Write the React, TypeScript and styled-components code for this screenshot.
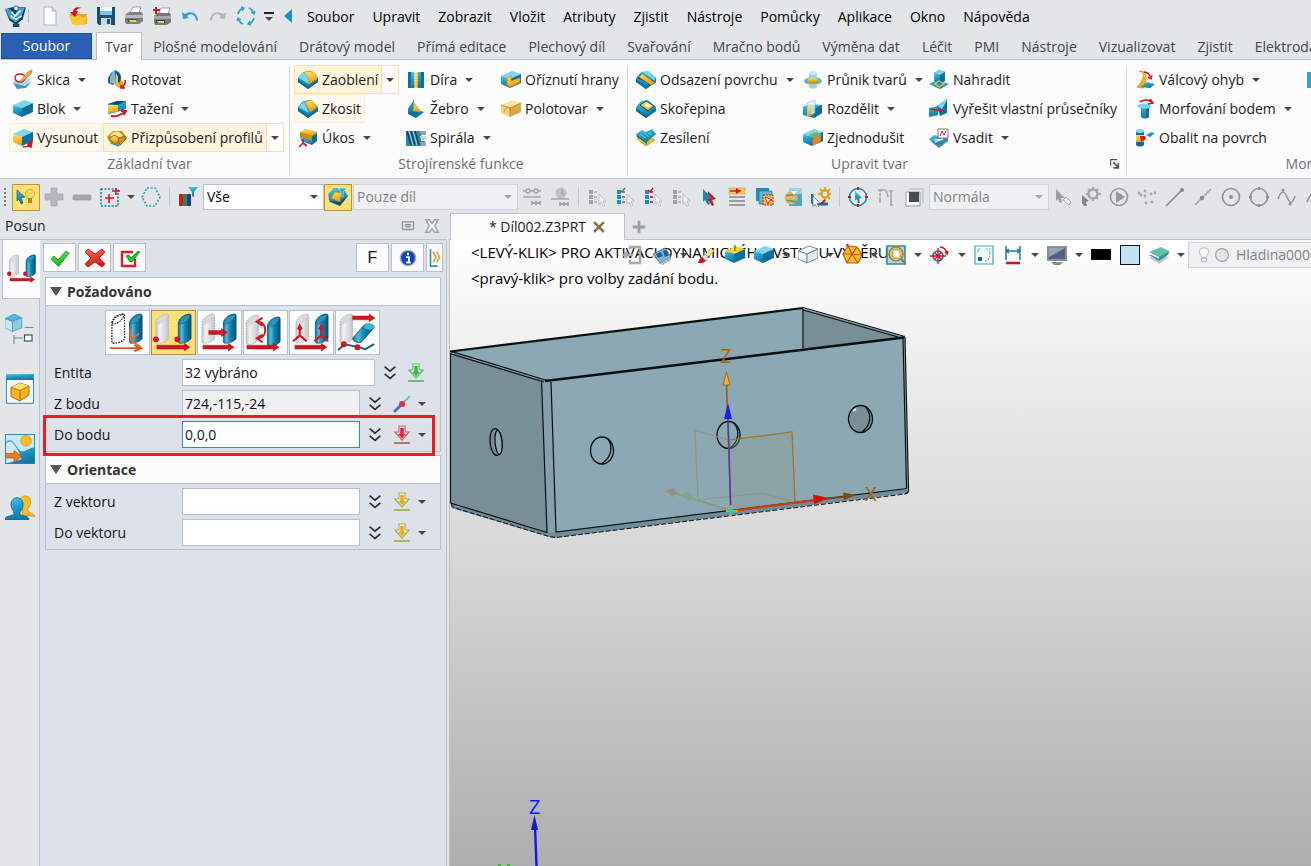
import React, { ReactNode } from "react";
import styled, { createGlobalStyle, css } from "styled-components";

const GlobalStyle = createGlobalStyle`
  * { box-sizing: border-box; }
  html, body { margin: 0; padding: 0; }
  body {
    font-family: "Open Sans", "Noto Sans", sans-serif;
    font-size: 14px;
    line-height: 20px;
    color: #1a1a1a;
    background: #e2e6e9;
    overflow: hidden;
  }
  button, input, select { font: inherit; color: inherit; margin: 0; }
  button { padding: 0; border: 0; background: none; white-space: nowrap; }
  svg { display: block; flex: none; }
`;

/* ---------- drawings ---------- */

const C = {
  top: "#7ad7ef",
  mid: "url(#mid)",
  dark: "#0f6f98",
  deep: "#0a4f70",
  yel: "url(#yel)",
  yelD: "#d08c12",
  yelL: "#ffe58a",
  red: "#d2161e",
  gray: "#a3a5a8",
  grayD: "#85878a",
};

type BlockProps = { a?: string; b?: string; c?: string };
const Block = ({ a = C.top, b = C.mid, c = C.dark }: BlockProps) => (
  <g>
    <polygon points="0,6 11,1 20,4 9,9" fill={a} />
    <polygon points="0,6 9,9 9,18 0,14" fill={b} />
    <polygon points="9,9 20,4 20,13 9,18" fill={c} />
  </g>
);

const Wedge = ({ children }: { children?: ReactNode }) => (
  <g>
    <polygon points="0,8 5,2 12,1 20,8 20,12 10,19 0,12" fill={C.mid} />
    <polygon points="0,9 10,16 20,9 20,12 10,19 0,12" fill={C.dark} />
    {children}
  </g>
);

const Pointer = ({ x = 0, y = 0, f = "#fff", s = "#8c8f93" }) => (
  <path d={`M${x} ${y}l7 7-3 .4 2 4-2 1-2-4-2 2z`} fill={f} stroke={s} strokeWidth="0.8" />
);

const Arrow = ({ x1, x2, y, c = C.red }: { x1: number; x2: number; y: number; c?: string }) => (
  <path d={`M${x1} ${y - 2}H${x2 - 6}V${y - 4}L${x2} ${y}L${x2 - 6} ${y + 4}V${y + 2}H${x1}Z`} fill={c} stroke="#8d0d12" strokeWidth="0.4" />
);

const Pipe = ({ x, y, look = "pipe" }: { x: number; y: number; look?: "pipe" | "ghost" | "outline" }) => {
  const solid = look === "pipe";
  return (
    <g transform={`translate(${x} ${y})`}>
      <path
        d="M0 9C1 4 5 1 11 0C12.500 0 13 1 13 2V25C12 28 6 30 2 30C0 30 0 29 0 28Z"
        fill={solid ? "url(#pipe)" : look === "ghost" ? "url(#ghost)" : "#fbfbfb"}
        stroke={solid ? "#0a5878" : look === "ghost" ? "#a5a8ab" : "#222"}
        strokeWidth={look === "outline" ? 1.3 : 0.8}
        strokeDasharray={solid ? undefined : "1.6 1.2"}
      />
      <path
        d="M0.500 9C2 4 7 1 12 0.500C13 3 8 10 1 10.500Z"
        fill={solid ? "#2596bd" : look === "ghost" ? "#d9dadc" : "#fbfbfb"}
        stroke={solid ? "#0a5878" : look === "ghost" ? "#b9bbbe" : "#222"}
        strokeWidth={look === "outline" ? 1.2 : 0.5}
        strokeDasharray={solid ? undefined : "1.6 1.2"}
      />
    </g>
  );
};

const Checklist = ({ a, b, mark }: { a: string; b: string; mark?: string }) => (
  <g>
    {[3, 8, 13].map((y) => (
      <g key={y}>
        <rect x="2" y={y} width="4" height="4" fill={a} />
        <rect x="7" y={y + 1} width="3" height="2" fill={b} />
      </g>
    ))}
    {mark && <path d="M5 3l2 2 3-4" stroke={mark} strokeWidth="1.3" fill="none" />}
    <Pointer x={12} y={7} f="#eceef0" s="#b3b5b8" />
  </g>
);

const art: Record<string, ReactNode> = {
  app: (
    <g>
      <path d="M1 4l6-2 13 0-3 11-6 5-6-4z" fill="#123b57" />
      <path d="M1 3l5 1 4 5 3-6 6-1-3 8-5 6-6-4z" fill="#3aa6d8" />
      <path d="M7 6l3 4 5-5M6 10l5 3 5-3" stroke="#eef8ff" strokeWidth="1.4" fill="none" />
      <circle cx="11" cy="3" r="2.2" fill="#dfe7ec" stroke="#345" strokeWidth=".8" />
      <path d="M8 17h6v3H8z" fill="#14466a" />
    </g>
  ),
  page: <path d="M4 1h8l4 4v14H4zM12 1v4h4" fill="#fff" stroke="#a9b3be" />,
  open: (
    <g>
      <path d="M2 8l2-2h5l2 2h8v10H4z" fill="#e9a21c" />
      <path d="M1 10h12l1 2 5-3-2 10H5z" fill="#fcc53c" />
      <path d="M14 2C9 0 5 2 5 6H2l5 5 3-6H8c1-2 3-3 6-3z" fill={C.red} />
    </g>
  ),
  save: (
    <g>
      <path d="M1 1h18v18H3l-2-2z" fill="#17506e" />
      <rect x="4" y="1" width="12" height="8" fill="#eaf6fb" />
      <path d="M4 5h12v4H4z" fill="#7cc6e4" />
      <rect x="5" y="12" width="10" height="7" fill="#cfd6db" />
      <rect x="11" y="13" width="3" height="5" fill="#17506e" />
    </g>
  ),
  print: (
    <g>
      <path d="M6 7l3-6h8l-2 6z" fill="#fff" stroke="#888" strokeWidth=".8" />
      <path d="M1 9l4-3h13l1 3v6l-4 3H2l-1-2z" fill="#7d8084" />
      <path d="M1 9h18v3H1z" fill="#b9bcbf" />
      <path d="M3 13h10v3H4z" fill="#4a4d51" />
      <path d="M5 14h7l1 2H6z" fill="#e9d44c" />
    </g>
  ),
  printAdd: (
    <g>
      <path d="M7 7l2-5h9l-2 6z" fill="#fff" stroke="#888" strokeWidth=".8" />
      <path d="M2 10l4-3h12l1 3v6l-4 3H3l-1-2z" fill="#74777b" />
      <path d="M2 10h17v3H2z" fill="#a9acaf" />
      <path d="M4 14h9v3H4z" fill="#3f4246" />
      <path d="M5 15h7v2H6z" fill="#e9d44c" />
      <path d="M4 1v7M1 4h7" stroke={C.red} strokeWidth="2" />
    </g>
  ),
  undo: <path d="M2 6l1 7 6-1-2-2c4-3 8-2 9 4l2 1c0-8-7-11-13-7z" fill="#2e9fc9" />,
  redo: <path d="M18 6l-1 7-6-1 2-2c-4-3-8-2-9 4l-2 1c0-8 7-11 13-7z" fill="#b3b7bb" />,
  cycle: (
    <g fill="none" stroke="#2ba0c8" strokeWidth="1.8">
      <path d="M2 8c1-3 2-5 5-6M13 2c3 1 4 3 5 6M18 12c-1 3-2 5-5 6M7 18c-3-1-4-3-5-6" />
      <path d="M5 1l3 1-2 3M19 5l-1 3-3-2M15 19l-3-1 2-3M1 15l1-3 3 2" strokeWidth="1.4" />
    </g>
  ),
  sketch: (
    <g>
      <path d="M0 12l7-6 11 3-5 9-10-1z" fill="#a9d8ea" />
      <path d="M0 13l12 3 7-5-6 7-9 1z" fill="#3e9cc2" />
      <ellipse cx="7" cy="8" rx="5" ry="4" fill="#fff" stroke={C.red} strokeWidth="1.4" />
      <path d="M8 10l7-8 4-2-1 4-8 7-3 1z" fill="#f4a73b" stroke="#a8671a" strokeWidth=".6" />
    </g>
  ),
  block: <Block />,
  extrude: (
    <g>
      <Block b={C.yel} />
      <path d="M10 19l6-1M15 16l4-3-1 6-3-1z" stroke={C.red} fill={C.red} strokeWidth="1.6" />
    </g>
  ),
  revolve: (
    <g>
      <path d="M1 8l3-5 4-3 4 2 2 4v8l-4-2-4 3-5-2z" fill={C.dark} />
      <path d="M3 7l3-6 2 0v13l-5-1z" fill="#7cb7d6" />
      <path d="M9 3l4 8 3 0v5l-4 2-4-3z" fill={C.yel} />
      <path d="M9 2l4 3v8l-2-1V6z" fill={C.deep} />
      <path d="M18 10c1 4-1 6-4 8M14 15v3h4" stroke={C.red} strokeWidth="1.6" fill="none" />
    </g>
  ),
  sweep: (
    <g>
      <path d="M1 5l9-3 9 0v8l-9 3-9 2z" fill={C.mid} />
      <path d="M1 5l9-3 9 0-8 4z" fill={C.deep} />
      <path d="M1 6l10 0v7l-10 1z" fill={C.yel} />
      <path d="M4 17c6 1 9-1 14-4M14 12l5 0-2 4" stroke={C.red} strokeWidth="1.8" fill="none" />
    </g>
  ),
  loft: (
    <g>
      <path d="M0 9l6-6 9 0 5 7-7 8-9-2z" fill={C.yelD} />
      <path d="M3 8c3-6 10-6 13 0l-5 3z" fill={C.yelL} />
      <path d="M2 11l5-4 6 3-4 6z" fill={C.yel} stroke="#7d5c12" strokeWidth=".8" />
      <path d="M11 11l6-3 2 3-6 6z" fill="#cf8f28" stroke="#7d5c12" strokeWidth=".7" />
      <path d="M4 15l8 3" stroke="#1d9fca" strokeWidth="1.6" />
    </g>
  ),
  fillet: (
    <Wedge>
      <path d="M1 8C2 4 4 2 7 3c3 2 4 7 4 11z" fill={C.top} />
      <path d="M6 3c3-3 9-2 11 1l2 5-8 5C11 9 9 5 6 3z" fill={C.yel} stroke={C.yelD} strokeWidth=".7" />
    </Wedge>
  ),
  chamfer: (
    <Wedge>
      <path d="M7 3l6-2 6 7-7 5z" fill={C.yel} stroke={C.yelD} strokeWidth=".7" />
      <path d="M1 8l5-5 5 11z" fill={C.top} />
    </Wedge>
  ),
  draft: (
    <g>
      <path d="M2 5l5-4 12 3-3 4v6l-6-2-8-2z" fill={C.mid} />
      <path d="M2 4l6-3 11 3-5 4z" fill={C.yel} />
      <path d="M2 4l12 4v5L2 9z" fill={C.yelD} />
      <path d="M14 9l5-4v8l-5 4z" fill={C.dark} />
      <path d="M3 9l11 4v4L3 13z" fill={C.mid} />
      <path d="M5 11v4M5 15l-4 4M5 15l4 3" stroke={C.red} strokeWidth="1.6" />
    </g>
  ),
  hole: (
    <g>
      <path d="M2 2h16v16H2z" fill={C.mid} />
      <path d="M2 2h3v16H2zM15 2h3v16h-3z" fill={C.dark} />
      <path d="M8 2h4v16H8z" fill={C.yel} />
      <path d="M10 1v18" stroke="#fff" strokeDasharray="2 1" />
    </g>
  ),
  rib: (
    <g>
      <path d="M2 10l6-9v9l10 3-8 6-8-4z" fill={C.dark} />
      <path d="M2 10l6-9v10l-6 3z" fill={C.mid} />
      <path d="M8 4l7 9-8-1z" fill={C.yel} stroke={C.yelD} strokeWidth=".7" />
    </g>
  ),
  spiral: (
    <g>
      <path d="M0 3h13l6 0v4h-4l2 3-2 3h4v5H0z" fill="#2b87ad" />
      <path d="M1 3l4 14M5 3l4 14M9 3l4 14" stroke="#0b4460" strokeWidth="1.6" />
      <path d="M3 3l4 14M7 3l4 14" stroke="#a5dced" strokeWidth="1" />
      <path d="M14 3h6v4h-5zM14 14h6v4h-5z" fill="#9b9ea2" />
      <path d="M14 8h6v4h-5z" fill="#cfd1d4" />
    </g>
  ),
  trimEdge: (
    <g>
      <Block />
      <path d="M6 8l4-2v5l9-3v4l-10 5-3-2z" fill={C.yel} stroke={C.yelD} strokeWidth=".7" />
    </g>
  ),
  stock: (
    <g>
      <Block a="#fae5a2" b="#f3d27a" c="#d9a642" />
      <path d="M3 13c1-4 3-5 6-4M9 9l11-5M0 6l9 3v9" stroke="#b98a26" strokeWidth=".9" fill="none" />
    </g>
  ),
  offset: (
    <Wedge>
      <path d="M1 8l4-4 14 8-3 3z" fill={C.deep} />
      <path d="M3 7l3-3 13 9-4 2z" fill={C.yel} stroke={C.yelD} strokeWidth=".5" />
      <path d="M7 2l5-1 7 7v3z" fill={C.top} />
    </Wedge>
  ),
  shell: (
    <Wedge>
      <path d="M4 6l6-4 8 5-6 5z" fill={C.yel} stroke={C.deep} />
      <path d="M8 6l4-2 4 3-4 2z" fill="#fff4c2" />
    </Wedge>
  ),
  thicken: (
    <g>
      <path d="M1 11l9 7 9-6-8-4z" fill={C.yel} stroke={C.yelD} strokeWidth=".7" />
      <path d="M0 6l6-4 4 2 6-3 4 5-9 8z" fill={C.mid} />
      <path d="M4 6l6 4M7 4l6 5M12 5l4 2" stroke="#8fdcf0" strokeWidth=".8" />
      <path d="M0 6l11 8v2L1 9z" fill={C.dark} />
    </g>
  ),
  intersect: (
    <g>
      <ellipse cx="10" cy="11" rx="9" ry="4" fill="#5cb6d6" />
      <path d="M6 3h8v14c-2 2-6 2-8 0z" fill="#9ad3e8" />
      <ellipse cx="10" cy="3" rx="4" ry="2" fill="#c5e8f3" />
      <path d="M5 10h10v2c-2 3-8 3-10 0z" fill={C.yelD} />
      <ellipse cx="10" cy="10" rx="5" ry="2" fill={C.yel} />
    </g>
  ),
  divide: (
    <g>
      <path d="M0 8l6-3 13 1v8l-8 5-11-3z" fill={C.mid} />
      <path d="M11 10l8-4v8l-8 5z" fill={C.dark} />
      <path d="M4 4l8-3v13l-8 4z" fill="#e9f5fa" opacity=".75" stroke="#8ab" strokeWidth=".7" />
      <path d="M5 8h3v9H5z" fill={C.yel} />
    </g>
  ),
  simplify: (
    <g>
      <Block />
      <path d="M5 7l8-3 6 3-8 4z" fill="#7fae5c" />
      <path d="M9 12l9-5v6l-8 5z" fill="#e0842e" />
    </g>
  ),
  replace: (
    <g>
      <path d="M0 14l8-4 12 4-9 5z" fill={C.mid} />
      <path d="M5 3l5-3 6 2v9l-5 3-6-3z" fill={C.dark} />
      <path d="M5 3l6 2v9l-6-3z" fill={C.mid} />
      <path d="M5 3l5-3 6 2-5 3z" fill={C.top} />
      <path d="M6 14l4-3 5 3-5 3z" fill="none" stroke="#fdc634" strokeWidth="1.2" />
    </g>
  ),
  selfInt: (
    <g>
      <path d="M0 9l9-2 0 9-9 2z" fill={C.mid} />
      <path d="M8 7l10-7v14l-7 3z" fill={C.dark} />
      <path d="M8 7l8-6 2 0-5 9z" fill={C.top} />
      <path d="M1 10l12 2" stroke={C.red} strokeWidth="1.5" fill="none" />
    </g>
  ),
  inlay: (
    <g>
      <path d="M0 11l5-4 14 3-9 9z" fill={C.mid} />
      <path d="M0 12l10 5 9-7v3l-9 7z" fill="#5d7f91" />
      <path d="M5 12l9-1M6 14l8-3" stroke="#fff" strokeWidth="1.2" />
      <path d="M9 1h10v9H9z" fill="#fff" stroke="#777" />
      <path d="M11 8l2-5 2 4 2-4" stroke={C.red} fill="none" />
    </g>
  ),
  bend: (
    <g>
      <path d="M4 1c6 1 5 7 1 13l-3 3 6 1c3-5 5-12 1-16z" fill={C.yel} stroke={C.yelD} strokeWidth=".8" />
      <path d="M6 17l6-5 8 2-5 4z" fill={C.mid} />
      <path d="M9 2c4 0 6 3 7 7M13 7l3 2 1-4" stroke={C.red} strokeWidth="1.3" fill="none" />
    </g>
  ),
  morph: (
    <g>
      <path d="M3 6h13l-2 4v8c-2 2-6 2-8 0V10z" fill={C.mid} />
      <ellipse cx="9.500" cy="7" rx="7" ry="2.400" fill={C.top} />
      <path d="M11 10v9c1 0 2 0 3-1v-8z" fill={C.dark} />
      <path d="M5 3c4-3 9-2 12 0M15 0l3 4-5 1" stroke={C.red} strokeWidth="1.6" fill="none" />
    </g>
  ),
  wrap: (
    <g>
      <path d="M1 3h8v14c-2 2-6 2-8 0z" fill={C.dark} />
      <ellipse cx="5" cy="3" rx="4" ry="2" fill={C.top} />
      <path d="M1 7h8v7H1z" fill={C.yel} />
      <path d="M5 8h5l1 3-5 3z" fill={C.red} />
      <path d="M11 7l5-3 4 1-5 4z" fill={C.mid} />
    </g>
  ),
  pick: (
    <g>
      <circle cx="14" cy="7" r="4.600" fill="#fbd75a" stroke="#d59a1a" strokeWidth=".8" />
      <path d="M12 11h4v5h-4z" fill="#b08b2e" />
      <path d="M1 3l8 7-4 1 2 5-2 1-2-5-2 2z" fill={C.mid} stroke={C.deep} strokeWidth=".6" />
    </g>
  ),
  plus: <path d="M7 1h6v6h6v6h-6v6H7v-6H1V7h6z" fill="#b5b8bb" stroke="#9b9ea1" strokeWidth=".6" />,
  minus: <rect x="1" y="8" width="18" height="5" rx="1" fill="#a5a8ab" stroke="#8d9093" strokeWidth=".6" />,
  marquee: (
    <g fill="none">
      <rect x="1" y="2" width="17" height="17" stroke="#1c7ea2" strokeWidth="1.6" strokeDasharray="2 1.5" />
      <path d="M9 7v9M5 11h9M16 1v7M12 4h8" stroke={C.red} strokeWidth="1.6" />
    </g>
  ),
  hexagon: <path d="M6 1h8l5 9-5 9H6L1 10z" fill="none" stroke="#2b9cc3" strokeWidth="1.6" strokeDasharray="2 1.6" />,
  colorFilter: (
    <g>
      <rect x="1" y="7" width="4" height="12" fill={C.red} />
      <rect x="5" y="7" width="4" height="12" fill="#2d8a34" />
      <rect x="9" y="7" width="4" height="12" fill="#2336a6" />
      <path d="M10 0h10l-4 5v5l-2-1V5z" fill={C.mid} />
    </g>
  ),
  partFilter: (
    <g>
      <path d="M0 7l6-6h9l5 8-8 8-9-3z" fill={C.mid} />
      <path d="M0 8l3 6 9 1 8-6-8 10-10-4z" fill={C.deep} />
      <path d="M3 11l4-6 6 1-1 9z" fill={C.yel} stroke={C.yelD} strokeWidth=".6" />
      <path d="M10 1h9l-4 4v5l-2-1V5z" fill={C.mid} stroke="#e8f6fb" strokeWidth=".6" />
    </g>
  ),
  chainRef: (
    <g stroke={C.gray} fill="none" strokeWidth="1.4">
      <path d="M1 4h3M8 4h4M16 4h3M1 10h18" />
      <circle cx="6" cy="4" r="2" />
      <circle cx="14" cy="4" r="2" />
      <path d="M10 16h9M10 14v4M14 14v4M18 14v4" strokeWidth="1.8" />
    </g>
  ),
  clockRef: (
    <g>
      <circle cx="11" cy="6" r="5.5" fill="#bfc1c3" />
      <path d="M1 12h18M12 3v4h3" stroke={C.gray} strokeWidth="1.6" fill="none" />
      <path d="M10 17h9M10 15v4M14 15v4M18 15v4" stroke={C.gray} strokeWidth="1.8" />
    </g>
  ),
  list1: <Checklist a="#a0a3a6" b="#b9bbbe" />,
  list2: <Checklist a="#1f8fb8" b="#7b8388" mark="#2f9b33" />,
  list3: <Checklist a="#1f8fb8" b="#d2333a" mark={C.red} />,
  list4: <Checklist a="#a0a3a6" b="#b9bbbe" />,
  cursor: (
    <g>
      <path d="M9 4l8 8-4 1 2 5-2 1-3-5-2 2z" fill={C.red} />
      <path d="M4 2l9 9-4 1 2 5-2 1-3-5-2 2z" fill="#1987ae" />
    </g>
  ),
  bars: (
    <g>
      <rect x="2" y="1" width="16" height="6" fill="#fbc84a" stroke="#b99" strokeWidth=".6" />
      <path d="M3 4h8M9 2l4 2-4 2" stroke={C.red} strokeWidth="1.4" fill="none" />
      <path d="M2 10h16M2 14h16M2 18h16" stroke="#9a9ea3" strokeWidth="2" />
    </g>
  ),
  stack: (
    <g>
      <path d="M1 1h13v13H1z" fill="#1d8fb8" />
      <path d="M4 4h13v13H4z" fill="#57b8d8" stroke="#1a7a9d" strokeWidth=".7" />
      <path d="M8 8h10v10H8z" fill="#fbb92d" stroke={C.red} strokeDasharray="2 1" />
      <path d="M10 10l7 3-3 1-1 3z" fill="#fff" stroke={C.red} strokeWidth=".8" />
    </g>
  ),
  globeBox: (
    <g>
      <path d="M6 1h13v18H6z" fill="#4ba7c7" />
      <path d="M6 1h13v6H6z" fill="#9ad3e6" />
      <circle cx="8" cy="11" r="6.500" fill="#e9b26c" />
      <path d="M3 8c3 2 6-2 10 0M4 14c3-2 6 2 9 0" stroke="#5d9a56" strokeWidth="1.6" fill="none" />
      <path d="M8 4l6 0-3 4z" fill="#fff" />
    </g>
  ),
  gearPath: (
    <g>
      <path d="M1 7v6c0 3 2 4 5 4h11" stroke="#18739a" strokeWidth="3" fill="none" />
      <circle cx="14" cy="7" r="3.600" fill="none" stroke="#e59e1e" strokeWidth="2.400" />
      <path d="M14 0v3M14 11v3M7 7h3M18 7h2M9 2l2 2M17 10l2 2M19 2l-2 2" stroke="#e59e1e" strokeWidth="1.800" />
      <path d="M10 17l4-4" stroke={C.red} strokeWidth="2" />
      <Pointer x={2} y={9} f="#fff" s="#678" />
    </g>
  ),
  compass: (
    <g>
      <circle cx="10" cy="10" r="8.500" fill="#e9f3f7" stroke="#1f86ab" strokeWidth="1.600" />
      <path d="M10 0v3M10 17v3M0 10h3M17 10h3" stroke={C.red} strokeWidth="2" />
      <path d="M7 4l7 7-3 .5 1 4-2 .5-1-4-2 2z" fill={C.mid} />
    </g>
  ),
  magnet: (
    <g stroke={C.gray} fill="none" strokeWidth="1.500">
      <path d="M4 16V4M4 4c5-3 7-1 8 6M15 5v14M2 3h4M13 4h4M14 18h3" />
      <path d="M4 5v1M4 9v1" stroke="#e2e6e9" />
    </g>
  ),
  dark: (
    <g>
      <path d="M2 5h14v14H2z" fill="#fff" stroke="#9a9da0" />
      <path d="M5 2h14v14" fill="none" stroke="#b5b8bb" />
      <rect x="5" y="5" width="10" height="10" fill="#4a4a4a" />
    </g>
  ),
  eraseCur: (
    <g>
      <path d="M3 2l9 9-4 0 1 4-2 1-2-4-2 2z" fill="#9b9da0" />
      <path d="M10 13l3-3 5 5-2 3z" fill="#f4f4f4" stroke="#a5a7aa" />
    </g>
  ),
  gearCur: (
    <g>
      <circle cx="12" cy="7" r="4.500" fill="none" stroke={C.gray} strokeWidth="2.500" />
      <path d="M12 0v3M12 11v3M5 7h3M16 7h4M7 2l2 2M15 10l2 2M17 2l-2 2" stroke={C.gray} strokeWidth="2" />
      <path d="M1 8l7 6-3 1 1 4-3 0-2-3z" fill="#85888b" />
    </g>
  ),
  play: (
    <g>
      <circle cx="10" cy="10" r="8.500" fill="none" stroke="#95989b" strokeWidth="1.600" />
      <path d="M7 4l9 6-9 6z" fill="#95989b" />
    </g>
  ),
  dots: (
    <g fill={C.gray}>
      {[[2, 6], [8, 4], [8, 9], [14, 7], [18, 6], [9, 16], [15, 15], [4, 8]].map(([x, y]) => (
        <circle key={`${x}-${y}`} cx={x} cy={y} r="1.400" />
      ))}
    </g>
  ),
  line1: (
    <g>
      <path d="M1 19L17 3" stroke={C.grayD} strokeWidth="1.600" />
      <circle cx="17" cy="3" r="2" fill={C.grayD} />
    </g>
  ),
  line2: (
    <g>
      <path d="M2 18L18 2" stroke={C.gray} strokeWidth="1.600" />
      <circle cx="9" cy="11" r="2.200" fill={C.grayD} />
    </g>
  ),
  circleDot: (
    <g>
      <circle cx="10" cy="10" r="8.500" fill="none" stroke="#8f9295" strokeWidth="1.600" />
      <circle cx="10" cy="10" r="2" fill="#8f9295" />
    </g>
  ),
  circleQ: (
    <g>
      <circle cx="10" cy="10" r="8.500" fill="none" stroke="#8f9295" strokeWidth="1.600" />
      <path d="M10 0v3M10 17v3M0 10h3M17 10h3" stroke="#8f9295" strokeWidth="2.400" />
    </g>
  ),
  wave: (
    <g>
      <path d="M1 12C3 6 6 2 9 8s5 13 9 1" fill="none" stroke="#8f9295" strokeWidth="1.400" />
      <circle cx="6" cy="3" r="1.500" fill="#8f9295" />
      <circle cx="13" cy="17" r="1.500" fill="#8f9295" />
    </g>
  ),
  exit: <path d="M7 4V2h10v16H7v-3M1 10h9M4 7l-3 3 3 3" fill="none" stroke="#a9a9a9" strokeWidth="2.400" />,
  orient: (
    <g>
      <path d="M1 9L13 3l6 9-11 6z" fill="#7fb5d4" stroke="#31688a" strokeWidth=".8" />
      <path d="M4 9l5-2 2 4-5 2zM11 6l3-1 3 5-4 2z" fill="#1b5f8b" />
      <path d="M3 17l5 1 11-6v3l-8 5z" fill="#a8b8c2" />
    </g>
  ),
  brush: (
    <g>
      <path d="M9 10l6-7 3 3-7 7z" fill={C.yelL} stroke={C.yelD} strokeWidth=".7" />
      <path d="M6 12l3-3 3 3-2 4z" fill="#dfe3e8" stroke="#999" strokeWidth=".6" />
      <path d="M3 15l3-3 4 4-3 2H2z" fill={C.red} />
    </g>
  ),
  boxTop: (
    <g>
      <Block a="#fbd22f" b={C.mid} />
      <path d="M10 6V0" stroke="#2f9b33" strokeWidth="1.400" />
    </g>
  ),
  cube: <Block />,
  cubeWire: (
    <g stroke="#5f86a3" strokeWidth=".9" strokeLinejoin="round">
      <Block a="#fbfdfe" b="#f3f7fa" c="#dfe9f0" />
    </g>
  ),
  wireBall: (
    <g>
      <path d="M1 9L6 1l9 1 5 8-4 8-11 0z" fill="#fdbf25" />
      <path d="M1 9L6 1l9 1 5 8-4 8-11 0zM10 9L6 1M10 9l5-7M10 9l10 1M10 9l6 9M10 9l-5 9M10 9H1" fill="none" stroke="#c9541a" strokeWidth="1.200" />
    </g>
  ),
  zoomPage: (
    <g>
      <path d="M1 1h18v18H1z" fill="#a6d6e8" stroke="#2f8cae" strokeWidth="1.600" />
      <circle cx="10" cy="9" r="7" fill="#f1c143" stroke="#8d6e2c" strokeWidth="1.200" />
      <path d="M7 5h5l2 2v6H7z" fill="#fff" stroke="#888" strokeWidth=".7" />
      <path d="M15 14l5 5" stroke="#a57819" strokeWidth="2" />
    </g>
  ),
  target: (
    <g fill="none" strokeWidth="1.600">
      <circle cx="8" cy="11" r="5" stroke="#2c6a93" />
      <path d="M8 3v16M0 11h16M5 8l6 6M11 8l-6 6" stroke={C.red} strokeWidth="1.300" />
      <path d="M10 2c4 0 6 2 7 7M15 7l2 2 1-3" stroke={C.red} />
    </g>
  ),
  frame: (
    <g>
      <path d="M1 1h18v18H1z" fill="#f3fafc" stroke="#4ba2c0" strokeWidth="1.200" />
      <rect x="4" y="12" width="4" height="4" fill="#146a8e" />
      <path d="M11 16c3 0 5-3 5-8M12 4h4v4M4 7V4h3" fill="none" stroke="#6bb6cf" strokeWidth="1.200" strokeDasharray="2 1" />
    </g>
  ),
  dimension: (
    <g fill="none">
      <path d="M3 1v14M17 1v14M3 6h14M6 4L3 6l3 2M14 4l3 2-3 2" stroke="#1d7fa5" strokeWidth="1.500" />
      <path d="M3 18h14" stroke={C.red} strokeWidth="2.600" />
    </g>
  ),
  monitor: (
    <g>
      <rect x="0" y="1" width="20" height="15" fill="#8b8e92" />
      <rect x="2" y="3" width="16" height="11" fill="#4f6187" />
      <path d="M2 3h16L2 12z" fill="#98a3ba" />
      <path d="M4 17h12l-3 3H7z" fill="#8a8d90" />
    </g>
  ),
  layers: (
    <g>
      <path d="M0 13l10-4 10 3-10 7z" fill="#c5c9cc" />
      <path d="M0 10l10-4 10 3-10 7z" fill="#2a8fb0" />
      <path d="M0 7l12-5 8 4-10 6z" fill="#66bfa6" />
      <path d="M0 7l10 5v2L0 9z" fill="#e9f5f3" />
      <path d="M10 12l10-6v2l-10 6z" fill="#3d9a86" />
    </g>
  ),
  bulb: <path d="M7 14h6v4H7zM7 13c0-3-3-4-3-7a6 5 0 0 1 12 0c0 3-3 4-3 7z" fill="#fbfbfb" stroke="#a4a7aa" />,
  ring: <circle cx="10" cy="10" r="8" fill="#e4e4e4" stroke="#9a9da0" strokeWidth="1.400" />,
  ok: <path d="M1 11l3-3 4 4 8-9 3 2-10 13H8z" fill="url(#green)" stroke="#16861a" strokeWidth=".8" />,
  cancel: <path d="M0 4l3-3 7 5 7-5 3 3-6 6 6 6-3 3-7-5-7 5-3-3 6-6z" fill="url(#redfill)" stroke="#a80f0f" strokeWidth=".8" />,
  apply: (
    <g>
      <path d="M15 11v7H2V4h11" fill="#fff" stroke="#e01f23" strokeWidth="2.400" />
      <path d="M6 8l3-1 2 3 7-7 2 1-8 10h-2z" fill="#1fc531" stroke="#128420" strokeWidth=".7" />
    </g>
  ),
  info: (
    <g>
      <circle cx="10" cy="10" r="8.500" fill="#1546b4" stroke="#a9b0bd" strokeWidth="1.600" />
      <path d="M10 4v3M8 9h3v6M8 15h5" stroke="#fff" strokeWidth="2" fill="none" />
    </g>
  ),
  flyout: (
    <g fill="none">
      <path d="M5 0v19h8" stroke="#2a94b9" strokeWidth="1.800" />
      <path d="M8 3l3 6-3 6M12 3l3 6-3 6" stroke="#e0983a" strokeWidth="1.800" />
    </g>
  ),
  tree: (
    <g>
      <g transform="translate(0 0) scale(.62)" stroke="#2b82a4" strokeWidth=".6">
        <polygon points="0,5 10,0 18,4 8,8" fill="#4fb9dc" />
        <polygon points="0,5 8,8 8,19 0,15" fill="#cdeaf4" />
        <polygon points="8,8 18,4 18,15 8,19" fill="#93cbe0" />
      </g>
      <path d="M13 9h6M6 14v6M6 16h6" stroke="#6d8fa2" fill="none" strokeWidth=".8" />
      <rect x="13" y="14" width="5" height="4" fill="#fff" stroke="#31566f" strokeWidth=".8" />
    </g>
  ),
  viewBox: (
    <g>
      <rect x="1" y="0.500" width="18" height="19" fill="#f4fafc" stroke="#2b82a4" strokeWidth=".6" />
      <path d="M1 0h18v4H1z" fill={C.mid} />
      <path d="M4 9l6-3 6 2v6l-6 4-6-3z" fill="#fbb41f" stroke="#a06a0c" strokeWidth=".6" />
      <path d="M4 9l6-3 6 2-6 3z" fill="#ffe066" />
      <path d="M4 9l6 2 6-3M10 11v7" fill="none" stroke="#a06a0c" strokeWidth=".6" />
    </g>
  ),
  scene: (
    <g>
      <rect x="0" y="0" width="20" height="20" fill="#c5e8f3" />
      <path d="M0 6c4-5 6 0 9 4s6-1 11-1v11H0z" fill={C.mid} />
      <path d="M0 7c4-5 6 0 9 4l2 6-11 3z" fill="#cfe9f2" stroke="#5d9db5" strokeWidth=".5" />
      <circle cx="14" cy="4.500" r="3.500" fill="#fdb92c" stroke="#d8891a" strokeWidth=".5" />
      <path d="M0 13h6v-2l5 4-5 4v-3H0z" fill="#f47b20" stroke="#b34e0d" strokeWidth=".5" />
      <rect x=".3" y=".3" width="19.400" height="19.400" fill="none" stroke="#2b82a4" strokeWidth=".6" />
    </g>
  ),
  people: (
    <g>
      <path d="M10 5c0-5 7-5 7 0 0 3-1 4-2 5 0 3 5 3 5 5l-8-1z" fill="#fdb92c" stroke="#c9861a" strokeWidth=".5" />
      <path d="M4 7c0-6 8-6 8 0 0 4-2 4-2 6s6 1 6 4H0c0-3 6-2 6-4S4 10 4 7z" fill={C.mid} stroke="#12678a" strokeWidth=".6" />
    </g>
  ),
  chevrons: <path d="M4 3l6 5 6-5M4 11l6 5 6-5" fill="none" stroke="#2b2b2b" strokeWidth="1.800" />,
  segment: (
    <g>
      <path d="M2 18l8-8" stroke="#2a86a8" strokeWidth="2.600" />
      <path d="M10 10l8-8" stroke="#6fb5cf" strokeWidth="1.800" />
      <circle cx="10" cy="10" r="3" fill="#e3303a" />
    </g>
  ),
  restore: (
    <g fill="none" stroke="#8c8f93" strokeWidth="1.800">
      <rect x="2" y="4" width="16" height="11" rx="1" />
      <rect x="7" y="8" width="6" height="3" />
    </g>
  ),
  close: <path d="M3 3h4l3 4 3-4h4l-4 7 4 7h-4l-3-4-3 4H3l4-7z" fill="#fff" stroke="#9b9ea2" strokeWidth="1.600" />,
  closeTab: <path d="M3 3l14 14M17 3L3 17" stroke="#86743f" strokeWidth="3.600" />,
  addTab: <path d="M10 1v18M1 10h18" stroke="#a39c98" strokeWidth="4" />,
  launcher: (
    <g fill="none" stroke="#4c4f54" strokeWidth="2">
      <path d="M3 14V3h12" />
      <path d="M8 8l8 8M17 9v9H8" strokeWidth="3" />
    </g>
  ),
  clipped: (
    <g>
      <path d="M2 2h14v16H2z" fill="#2ea6cc" />
      <path d="M7 2h5v16H7z" fill={C.yel} />
    </g>
  ),
  arc: <path d="M2 15C4 8 8 4 18 3" fill="none" stroke="#8f9295" strokeWidth="1.800" />,
};

const Icon = ({ name, size = 20 }: { name: string; size?: number }) => (
  <svg width={size} height={size} viewBox="0 0 20 20" aria-hidden="true">
    {art[name]}
  </svg>
);

const DownArrow = ({ fill, stroke }: { fill: string; stroke: string }) => (
  <svg width="18" height="20" viewBox="0 0 18 20" aria-hidden="true">
    <path d="M6 1h6v6h4l-7 8-7-8h4z" fill="#fff" stroke={stroke} strokeWidth="1.2" />
    <path d="M7.500 3h3v6h2L9 13 5.500 9h2z" fill={fill} stroke={fill} strokeWidth=".6" />
    <path d="M1 18h16" stroke={stroke} strokeWidth="1.800" />
  </svg>
);

const moveArt: ReactNode[] = [
  <g key="0">
    <Pipe x={5} y={1} look="outline" />
    <Pipe x={23} y={1} />
    <path d="M3 36H33M28 33l7 3-7 3" stroke="#e0571d" strokeWidth="2" fill="none" />
    <path d="M24 16v12l9-7M24 28l11 7" stroke="#e9682a" strokeWidth="1.800" fill="none" />
  </g>,
  <g key="1">
    <Pipe x={3} y={1} look="ghost" />
    <Pipe x={26} y={1} />
    <circle cx="3" cy="27" r="3" fill={C.red} />
    <circle cx="25" cy="27" r="3" fill={C.red} />
    <Arrow x1={4} x2={38} y={35} />
  </g>,
  <g key="2">
    <Pipe x={3} y={1} look="ghost" />
    <Pipe x={25} y={1} />
    <Arrow x1={10} x2={29} y={20} />
    <Arrow x1={4} x2={36} y={35} />
  </g>,
  <g key="3">
    <Pipe x={1} y={2} look="ghost" />
    <Pipe x={23} y={4} />
    <path d="M14 9c9 1 9 16 0 17M18 5l-6 4 6 4M18 22l-6 4 6 4" stroke={C.red} strokeWidth="2" fill="none" />
    <Arrow x1={2} x2={35} y={35} />
  </g>,
  <g key="4">
    <Pipe x={5} y={1} look="ghost" />
    <Pipe x={25} y={1} />
    {[9, 31].map((x) => (
      <path key={x} d={`M${x} 14v9l-7 6M${x} 23l7 6M${x - 2} 17l2-4 2 4`} stroke={C.red} strokeWidth="2.200" fill="none" />
    ))}
    <Arrow x1={4} x2={37} y={35} />
  </g>,
  <g key="5">
    <Pipe x={3} y={1} look="ghost" />
    <Arrow x1={16} x2={39} y={5} />
    <path d="M16 26L28 12C33 10 39 12 38 15L25 30C20 31 16 29 16 26Z" fill="url(#pipe)" stroke="#0a5878" strokeWidth=".8" />
    <ellipse cx="33" cy="14" rx="5.500" ry="3.200" fill="#3cb4da" />
    <path d="M1 38l7-6 14 3 7 2 9-5" stroke="#135f83" strokeWidth="2" fill="none" />
    <circle cx="7" cy="32" r="3" fill={C.red} />
    <circle cx="21" cy="35" r="3" fill={C.red} />
  </g>,
];

const MoveArt = ({ index, size = 40 }: { index: number; size?: number }) => (
  <svg width={size} height={size} viewBox="0 0 41 41" aria-hidden="true">
    {moveArt[index]}
  </svg>
);

const stops: [string, boolean, [string, string][]][] = [
  ["pipe", true, [["0", "#0d6c92"], [".25", "#56bcdc"], [".5", "#1687b0"], ["1", "#084e6d"]]],
  ["ghost", true, [["0", "#c5c7c9"], [".3", "#f2f2f3"], ["1", "#c3c5c8"]]],
  ["mid", false, [["0", "#56c6e6"], [".5", "#1f9fc9"], ["1", "#117ba5"]]],
  ["yel", false, [["0", "#ffe07a"], [".5", "#fcc22f"], ["1", "#eb9f17"]]],
  ["green", false, [["0", "#6fe85c"], ["1", "#1db51c"]]],
  ["redfill", false, [["0", "#ff6a5c"], ["1", "#dc1b17"]]],
];

const Gradients = () => (
  <svg width="0" height="0" aria-hidden="true">
    <defs>
      {stops.map(([id, across, list]) => (
        <linearGradient key={id} id={id} x1="0" y1="0" x2={across ? "1" : ".3"} y2={across ? "0" : "1"}>
          {list.map(([o, c]) => (
            <stop key={o} offset={o} stopColor={c} />
          ))}
        </linearGradient>
      ))}
    </defs>
  </svg>
);

/* ---------- shared parts ---------- */

const line = "#b9bfcb";

const Page = styled.div`
  display: flex;
  flex-direction: column;
  min-height: 100vh;
  overflow: hidden;
`;

const Caret = styled.span<{ $muted?: boolean }>`
  flex: none;
  width: 0;
  height: 0;
  border: 4px solid transparent;
  border-top-color: ${(p) => (p.$muted ? "#a5a7aa" : "#474747")};
  border-bottom: 0;
`;

const CaretButton = styled.button<{ $slim?: boolean }>`
  flex: none;
  display: flex;
  align-items: center;
  justify-content: center;
  width: ${(p) => (p.$slim ? 13 : 15)}px;
  height: 26px;
`;

const DropCaret = ({ label, slim }: { label: string; slim?: boolean }) => (
  <CaretButton $slim={slim} aria-label={label}>
    <Caret />
  </CaretButton>
);

/* ---------- title row ---------- */

const TitleRow = styled.header`
  display: flex;
  align-items: center;
  height: 32px;
  padding-left: 4px;
`;

const QuickButton = styled.button<{ $wide?: boolean }>`
  flex: none;
  display: flex;
  align-items: center;
  justify-content: ${(p) => (p.$wide ? "flex-start" : "center")};
  width: ${(p) => (p.$wide ? 32 : 28)}px;
  height: 28px;
`;

const QuickMore = styled.button`
  display: grid;
  justify-items: center;
  gap: 3px;
  width: 18px;
  &::before {
    content: "";
    width: 10px;
    height: 2px;
    background: #222;
  }
`;

const QuickRule = styled.span`
  width: 1px;
  height: 14px;
  margin-left: 2px;
  background: #b4b8be;
`;

const Collapse = styled.button`
  width: 8px;
  height: 14px;
  margin-left: 6px;
  background: #1d8fd0;
  clip-path: polygon(100% 0, 100% 100%, 0 50%);
`;

const Menu = styled.nav`
  display: flex;
  gap: 18px;
  padding: 1px 0 0 15px;
  color: #000;
`;

/* ---------- ribbon ---------- */

const Tabs = styled.nav`
  display: flex;
  align-items: stretch;
  height: 28px;
  padding-left: 1px;
  box-shadow: inset 0 -1px ${line};
`;

const FileTab = styled.button`
  flex: none;
  width: 91px;
  margin: 1px 4px 1px 0;
  border: 1px solid #2a72d0;
  outline: 1px solid #1c4f9c;
  outline-offset: -1px;
  background: #2a60b4;
  color: #fff;
`;

const Tab = styled.button<{ $active?: boolean }>`
  flex: none;
  padding: 1px 11px 0;
  color: #444;
  ${(p) =>
    p.$active &&
    css`
      padding: 0 8px;
      border: 1px solid ${line};
      border-bottom: 0;
      background: #fcfcfc;
    `}
`;

const Ribbon = styled.section`
  display: flex;
  height: 119px;
  border-bottom: 1px solid ${line};
  background: #fcfcfc;
`;

const Group = styled.div<{ $width: number; $inset: number }>`
  flex: none;
  position: relative;
  width: ${(p) => p.$width}px;
  padding: 5px 0 0 ${(p) => p.$inset}px;
  &::after {
    content: "";
    position: absolute;
    inset: 6px 0 3px auto;
    width: 1px;
    background: #d4d6da;
  }
`;

const GroupGrid = styled.div<{ $columns: string }>`
  display: grid;
  grid-template-columns: ${(p) => p.$columns};
  grid-template-rows: repeat(3, 29px);
  grid-auto-flow: column;
`;

const GroupLabel = styled.div<{ $room?: boolean }>`
  height: 24px;
  padding-right: ${(p) => (p.$room ? 20 : 0)}px;
  line-height: 24px;
  text-align: center;
  color: #6c7079;
`;

const Launcher = styled.button`
  position: absolute;
  right: 7px;
  bottom: 9px;
`;

const Command = styled.div<{ $tone?: "soft" | "strong" }>`
  display: flex;
  align-items: center;
  justify-self: start;
  height: 29px;
  border: 1px solid ${(p) => (p.$tone === "strong" ? "#f7e3a0" : p.$tone ? "#faf0cf" : "transparent")};
  background: ${(p) => (p.$tone === "strong" ? "#fcf4dc" : p.$tone ? "#fdf9ec" : "none")};
`;

const CommandButton = styled.button`
  display: flex;
  align-items: center;
  gap: 4px;
  height: 27px;
  padding: 0 3px;
`;

const CommandMore = styled.button<{ $boxed?: boolean }>`
  display: flex;
  align-items: center;
  justify-content: center;
  width: ${(p) => (p.$boxed ? 17 : 18)}px;
  height: 27px;
  border-left: ${(p) => (p.$boxed ? "1px solid #f7e3a0" : "0")};
  background: ${(p) => (p.$boxed ? "#fcfcfc" : "none")};
`;

type Cmd = { icon: string; text: string; more?: boolean; tone?: "soft" | "strong" };
type GroupData = { label: string; width: number; inset: number; columns: string; items: Cmd[]; launcher?: boolean };

const groups: GroupData[] = [
  {
    label: "Základní tvar",
    width: 290,
    inset: 9,
    columns: "94px 186px",
    items: [
      { icon: "sketch", text: "Skica", more: true },
      { icon: "block", text: "Blok", more: true },
      { icon: "extrude", text: "Vysunout", tone: "soft" },
      { icon: "revolve", text: "Rotovat" },
      { icon: "sweep", text: "Tažení", more: true },
      { icon: "loft", text: "Přizpůsobení profilů", more: true, tone: "strong" },
    ],
  },
  {
    label: "Strojírenské funkce",
    width: 338,
    inset: 4,
    columns: "108px 95px 130px",
    items: [
      { icon: "fillet", text: "Zaoblení", more: true, tone: "strong" },
      { icon: "chamfer", text: "Zkosit", tone: "soft" },
      { icon: "draft", text: "Úkos", more: true },
      { icon: "hole", text: "Díra", more: true },
      { icon: "rib", text: "Žebro", more: true },
      { icon: "spiral", text: "Spirála", more: true },
      { icon: "trimEdge", text: "Oříznutí hrany" },
      { icon: "stock", text: "Polotovar", more: true },
    ],
  },
  {
    label: "Upravit tvar",
    width: 499,
    inset: 4,
    columns: "167px 126px 190px",
    launcher: true,
    items: [
      { icon: "offset", text: "Odsazení povrchu", more: true },
      { icon: "shell", text: "Skořepina" },
      { icon: "thicken", text: "Zesílení" },
      { icon: "intersect", text: "Průnik tvarů", more: true },
      { icon: "divide", text: "Rozdělit", more: true },
      { icon: "simplify", text: "Zjednodušit" },
      { icon: "replace", text: "Nahradit" },
      { icon: "selfInt", text: "Vyřešit vlastní průsečníky" },
      { icon: "inlay", text: "Vsadit", more: true },
    ],
  },
  {
    label: "Morfování",
    width: 380,
    inset: 4,
    columns: "170px 130px",
    items: [
      { icon: "bend", text: "Válcový ohyb", more: true },
      { icon: "morph", text: "Morfování bodem", more: true },
      { icon: "wrap", text: "Obalit na povrch" },
      { icon: "clipped", text: "" },
    ],
  },
];

/* ---------- selection toolbar ---------- */

const ToolRow = styled.div`
  display: flex;
  align-items: center;
  height: 34px;
  padding: 2px 0 0 4px;
`;

const Grip = styled.span`
  flex: none;
  width: 2px;
  height: 18px;
  margin-right: 6px;
  background: repeating-linear-gradient(#7c8088 0 2px, transparent 2px 4px);
`;

const Tool = styled.button<{ $on?: boolean }>`
  flex: none;
  display: flex;
  align-items: center;
  justify-content: center;
  width: 28px;
  height: 27px;
  border: 1px solid ${(p) => (p.$on ? "#c09437" : "transparent")};
  background: ${(p) => (p.$on ? "#fee078" : "none")};
`;

const Rule = styled.span`
  flex: none;
  width: 1px;
  height: 20px;
  margin: 0 4px;
  background: #c3c7ce;
`;

const SelectBox = styled.span<{ $width: number; $off?: boolean }>`
  flex: none;
  position: relative;
  display: flex;
  width: ${(p) => p.$width}px;
  height: 26px;
  margin-left: 1px;
  color: ${(p) => (p.$off ? "#838383" : "#000")};
  select {
    appearance: none;
    width: 100%;
    padding: 0 20px 0 3px;
    border: 1px solid ${(p) => (p.$off ? "#cfd3da" : line)};
    border-radius: 0;
    background: ${(p) => (p.$off ? "#eff0f1" : "#fff")};
    color: inherit;
    opacity: 1;
  }
  ${Caret} {
    position: absolute;
    right: 6px;
    top: 11px;
  }
`;

/* ---------- workspace ---------- */

const Workspace = styled.main`
  flex: 1;
  display: flex;
  gap: 2px;
`;

const Side = styled.aside`
  flex: none;
  display: flex;
  flex-direction: column;
  width: 447px;
`;

const SideTitle = styled.div`
  display: flex;
  align-items: center;
  height: 27px;
  padding: 0 3px 0 5px;
  border-bottom: 1px solid ${line};
  span { flex: 1; }
`;

const SmallButton = styled.button`
  display: flex;
  align-items: center;
  justify-content: center;
  width: 24px;
  height: 24px;
`;

const NewTab = styled(SmallButton)`
  width: 28px;
  height: 27px;
`;

const SideBody = styled.div`
  flex: 1;
  display: flex;
  border-right: 1px solid ${line};
`;

const Rail = styled.nav`
  flex: none;
  display: flex;
  flex-direction: column;
  width: 40px;
  border-right: 1px solid ${line};
`;

const RailButton = styled.button<{ $active?: boolean }>`
  display: flex;
  align-items: center;
  justify-content: center;
  height: 60px;
  ${(p) =>
    p.$active &&
    css`
      height: 59px;
      margin: 0 -1px 0 2px;
      border: 1px solid ${line};
      border-width: 0 0 1px 1px;
      background: #fcfcfc;
    `}
`;

const Form = styled.form`
  flex: 1;
  position: relative;
  display: flex;
  flex-direction: column;
  gap: 3px;
  padding: 3px 5px 0 5px;
  background: #dde2ea;
`;

const FormBar = styled.div`
  display: flex;
  gap: 2px;
  margin: 0 -2px 2px -2px;
`;

const BarButton = styled.button<{ $slim?: boolean; $push?: boolean }>`
  display: flex;
  align-items: center;
  justify-content: center;
  width: ${(p) => (p.$slim ? 17 : 33)}px;
  height: 29px;
  margin-left: ${(p) => (p.$push ? "auto" : 0)};
  overflow: hidden;
  border: 1px solid ${line};
  background: #fcfcfc;
  font-family: "Liberation Sans", sans-serif;
  font-size: 16px;
`;

const Section = styled.section`
  border: 1px solid ${line};
`;

const SectionHead = styled.button`
  display: flex;
  align-items: center;
  gap: 5px;
  width: 100%;
  height: 28px;
  padding: 0 4px;
  border-bottom: 1px solid ${line};
  background: #fcfcfc;
  color: #333;
  font-weight: 700;
  &::before {
    content: "";
    border: 6px solid transparent;
    border-top: 9px solid #50555b;
    border-bottom: 0;
  }
`;

const SectionBody = styled.div`
  display: flex;
  flex-direction: column;
  gap: 4px;
  padding: 4px 9px 3px 8px;
`;

const Modes = styled.div`
  display: flex;
  justify-content: center;
  gap: 1px;
  padding-right: 1px;
`;

const Mode = styled.button<{ $on?: boolean }>`
  display: flex;
  align-items: center;
  justify-content: center;
  width: 45px;
  height: 45px;
  border: 1px solid ${(p) => (p.$on ? "#b98d3c" : line)};
  background: ${(p) => (p.$on ? "#fee078" : "#fcfcfc")};
`;

const Field = styled.div`
  display: grid;
  grid-template-columns: 128px 1fr auto;
  align-items: center;
  height: 27px;
  color: #111;
`;

const TextBox = styled.input<{ $shade?: boolean; $focus?: boolean }>`
  width: 100%;
  min-width: 0;
  height: 27px;
  padding: 0 2px;
  border: 1px solid ${(p) => (p.$focus ? "#1e88e5" : line)};
  border-radius: 0;
  outline: 0;
  background: ${(p) => (p.$shade ? "#f0f0f0" : "#fff")};
`;

const FieldTools = styled.div`
  display: flex;
  align-items: center;
  padding-right: 3px;
  button { display: flex; align-items: center; justify-content: center; width: 29px; height: 26px; }
  button + button { width: 26px; }
  button + button + button { width: 13px; }
  button:nth-child(2):last-child { width: 24px; }
`;

const Marker = styled.div`
  position: absolute;
  top: 175px;
  right: 11px;
  left: 3px;
  height: 41px;
  border: 3px solid #ed1c24;
  pointer-events: none;
`;

const View = styled.section`
  flex: 1;
  display: flex;
  flex-direction: column;
  min-width: 0;
`;

const DocTabs = styled.div`
  display: flex;
  height: 27px;
  padding-left: 1px;
  box-shadow: inset 0 -1px ${line};
`;

const DocTab = styled.div`
  display: flex;
  align-items: center;
  gap: 6px;
  width: 175px;
  padding-left: 38px;
  border: 1px solid ${line};
  border-bottom: 0;
  background: #fcfcfc;
`;

const Canvas = styled.div`
  flex: 1;
  position: relative;
  overflow: hidden;
  border-left: 1px solid ${line};
  background: linear-gradient(#fff 0, #f1f1f1 15%, #d3d3d3 56%, #aeaeae 100%);
`;

const Hint = styled.p`
  position: absolute;
  top: -1px;
  left: 21px;
  margin: 0;
  font-size: 15px;
  line-height: 26px;
  color: #000;
  white-space: nowrap;
`;

const Scene = styled.svg`
  position: absolute;
  top: 0;
  left: 0;
  text { font-size: 20px; }
`;

const Triad = styled.svg`
  position: absolute;
  bottom: 0;
  left: 40px;
  text { font-size: 20px; }
`;

const ViewBar = styled.div`
  position: absolute;
  top: 1px;
  left: 168px;
  display: flex;
  align-items: center;
  height: 27px;
`;

const ViewTool = styled.button`
  flex: none;
  display: flex;
  align-items: center;
  justify-content: center;
  width: 29px;
  height: 27px;
`;

const Swatch = styled.span<{ $color: string; $tall?: boolean }>`
  width: 20px;
  height: ${(p) => (p.$tall ? 20 : 11)}px;
  border: 1px solid #111;
  background: ${(p) => p.$color};
`;

const LayerBox = styled.div`
  flex: none;
  display: flex;
  align-items: center;
  gap: 2px;
  width: 180px;
  height: 26px;
  padding-left: 7px;
  border: 1px solid #cfd3da;
  background: #eff0f1;
  color: #838383;
  select {
    appearance: none;
    flex: 1;
    padding: 0 0 0 4px;
    border: 0;
    background: none;
    color: inherit;
    opacity: 1;
  }
`;

const viewTools: [string, boolean][] = [
  ["exit", false],
  ["orient", true],
  ["brush", false],
  ["boxTop", false],
  ["cube", true],
  ["cubeWire", true],
  ["wireBall", true],
  ["zoomPage", true],
  ["target", true],
  ["frame", false],
  ["dimension", true],
  ["monitor", true],
];

const Model = () => (
  <Scene width="480" height="310" viewBox="450 240 480 310" aria-label="3D model">
    <g strokeLinejoin="round">
      <polygon points="450,351 803,308 905,337 908,489 907,493 553,537 455,508 450,503" fill="#8ca8b3" />
      <polygon points="450,353 542,380 547,533 450,503" fill="#788f98" />
      <polygon points="803,309 904,337 803,349" fill="#788f98" />
      <polygon points="547,533 907,489 907,493 553,538 451,508 451,503" fill="#718d99" />
      <polygon points="542,380 551,381 556,532 547,533" fill="#83a0ab" />
    </g>
    <g fill="none" stroke="#0a0f12" strokeWidth="1.200">
      <path d="M450 351.500L803 308" strokeWidth="2.200" />
      <path d="M545 381L904 337.500" strokeWidth="2.400" />
      <path d="M450 351L547 380.500M450 353.500L544 382M803 307.500L905 336.500M803 310L898 337M803 309V348" />
      <path d="M450.500 353V503L547 532.500M541.500 380L547 533M551 382L556 532L907 488.500M903 338L906.500 488M905 337L908.500 489Q909 493 905 494" />
      <path d="M451 504Q452 507 455 508L549 536.500L556 537.500L905 494" strokeWidth="1" strokeDasharray="5 2" />
    </g>
    <g fill="#8ca8b3" stroke="#0a0f12" strokeWidth="1.300">
      <ellipse cx="496" cy="442" rx="6" ry="13.500" transform="rotate(-5 496 442)" fill="#788f98" />
      <ellipse cx="498.500" cy="442.500" rx="3.500" ry="12" transform="rotate(-5 498 442)" />
      <ellipse cx="602" cy="450.500" rx="11.500" ry="13.500" />
      <path d="M608 439C613 446 612 458 601 464" fill="none" />
      <ellipse cx="728.500" cy="435" rx="11.500" ry="13.500" />
      <path d="M734 423C740 430 739 442 730 448" fill="none" />
      <ellipse cx="860.500" cy="419" rx="12" ry="13.500" fill="#788f98" />
      <path d="M866 407C872 415 871 425 862 432" fill="none" />
      <path d="M853 411l3-2" stroke="#fff" strokeWidth="2" />
    </g>
    <polygon points="729,440 792,432 795,502 731,510" fill="#8c9b90" opacity=".35" />
    <g fill="none" strokeWidth="1.200">
      <path d="M731 510L698 500L695 430L729 440M698 500L762 493L795 502" stroke="#91917a" opacity=".8" />
      <path d="M729 440L792 432L795 502" stroke="#a8701a" />
      <path d="M731 511L668 491" stroke="#8c9a6c" />
      <path d="M731 511L850 496" stroke="#8a4d0c" strokeWidth="1.600" />
      <path d="M726.500 384L731 511" stroke="#a35a10" strokeWidth="1.600" />
      <path d="M728 418L730.500 508" stroke="#4a3ac0" strokeWidth="1.400" />
      <path d="M731 511L815 500" stroke="#c8400c" strokeWidth="2" />
    </g>
    <polygon points="726.500,372 723,385 730,385" fill="#f0b030" stroke="#96600e" strokeWidth=".8" />
    <polygon points="728,403 724,419 732,419" fill="#1e1ee0" />
    <polygon points="829,498 813,494.500 814,504" fill="#d60d0d" />
    <polygon points="856,495 843,492.500 844,500" fill="#7d4b10" />
    <path d="M680 495l8-3 5 4-4 5z" fill="#7da88c" />
    <path d="M666 491l7-3 4 4-4 5z" fill="#8f9384" />
    <path d="M731 505v12M726 511h12" stroke="#f59a1c" strokeWidth="2" />
    <path d="M728 511h7M731 508v6" stroke="#19d3cf" strokeWidth="2.600" />
    <text x="720" y="363" fill="#a8650f">Z</text>
    <text x="865" y="501" fill="#a8650f">X</text>
  </Scene>
);

const fields1 = [
  { id: "entita", label: "Entita", value: "32 vybráno", kind: "green" },
  { id: "z-bodu", label: "Z bodu", value: "724,-115,-24", kind: "segment" },
  { id: "do-bodu", label: "Do bodu", value: "0,0,0", kind: "red" },
];
const fields2 = [
  { id: "z-vektoru", label: "Z vektoru", value: "", kind: "amber" },
  { id: "do-vektoru", label: "Do vektoru", value: "", kind: "amber" },
];

const FieldRow = ({ id, label, value, kind }: { id: string; label: string; value: string; kind: string }) => (
  <Field>
    <label htmlFor={id}>{label}</label>
    <TextBox id={id} defaultValue={value} $shade={kind === "segment"} $focus={kind === "red"} />
    <FieldTools>
      <button type="button" aria-label="Rozbalit"><Icon name="chevrons" size={18} /></button>
      <button type="button" aria-label="Vybrat">
        {kind === "segment" ? (
          <Icon name="segment" />
        ) : (
          <DownArrow
            fill={kind === "green" ? "#2fbf3a" : kind === "red" ? "#e0203c" : "#f0a818"}
            stroke={kind === "green" ? "#62b56a" : kind === "red" ? "#c4606c" : "#a5b04a"}
          />
        )}
      </button>
      {kind !== "green" && <button type="button" aria-label="Další"><Caret /></button>}
    </FieldTools>
  </Field>
);

const tools = (names: string[]) =>
  names.map((n) => (
    <Tool key={n} aria-label={n}>
      <Icon name={n} />
    </Tool>
  ));

export default function App() {
  return (
    <Page>
      <GlobalStyle />
      <Gradients />
      <TitleRow>
        <QuickButton $wide aria-label="Aplikace">
          <Icon name="app" size={22} />
          <QuickRule />
        </QuickButton>
        {["page", "open", "save", "print", "printAdd", "undo", "redo", "cycle"].map((n) => (
          <QuickButton key={n} aria-label={n}><Icon name={n} /></QuickButton>
        ))}
        <QuickMore aria-label="Přizpůsobit"><Caret /></QuickMore>
        <Collapse aria-label="Sbalit" />
        <Menu>
          {["Soubor", "Upravit", "Zobrazit", "Vložit", "Atributy", "Zjistit", "Nástroje", "Pomůcky", "Aplikace", "Okno", "Nápověda"].map((m) => (
            <button key={m}>{m}</button>
          ))}
        </Menu>
      </TitleRow>
      <Tabs>
        <FileTab>Soubor</FileTab>
        <Tab $active>Tvar</Tab>
        {["Plošné modelování", "Drátový model", "Přímá editace", "Plechový díl", "Svařování", "Mračno bodů", "Výměna dat", "Léčit", "PMI", "Nástroje", "Vizualizovat", "Zjistit", "Elektroda"].map((t) => (
          <Tab key={t}>{t}</Tab>
        ))}
      </Tabs>
      <Ribbon>
        {groups.map((g) => (
          <Group key={g.label} $width={g.width} $inset={g.inset}>
            <GroupGrid $columns={g.columns}>
              {g.items.map((c) => (
                <Command key={c.icon} $tone={c.tone}>
                  <CommandButton aria-label={c.text || "Další příkazy"}>
                    <Icon name={c.icon} />
                    {c.text}
                  </CommandButton>
                  {c.more && (
                    <CommandMore $boxed={!!c.tone} aria-label={`${c.text} – další`}>
                      <Caret />
                    </CommandMore>
                  )}
                </Command>
              ))}
            </GroupGrid>
            <GroupLabel $room={g.launcher}>{g.label}</GroupLabel>
            {g.launcher && <Launcher aria-label="Nastavení"><Icon name="launcher" size={11} /></Launcher>}
          </Group>
        ))}
      </Ribbon>
      <ToolRow>
        <Grip />
        <Tool $on aria-label="Výběr"><Icon name="pick" /></Tool>
        {tools(["plus", "minus", "marquee"])}
        <DropCaret slim label="Režim výběru" />
        {tools(["hexagon"])}
        <Rule />
        {tools(["colorFilter"])}
        <SelectBox $width={121}>
          <select aria-label="Filtr"><option>Vše</option></select>
          <Caret />
        </SelectBox>
        <Tool $on aria-label="Filtr dílu"><Icon name="partFilter" /></Tool>
        <SelectBox $width={165} $off>
          <select aria-label="Rozsah" disabled><option>Pouze díl</option></select>
          <Caret $muted />
        </SelectBox>
        {tools(["chainRef", "clockRef"])}
        <Rule />
        {tools(["list1", "list2", "list3", "list4", "cursor", "bars", "stack", "globeBox", "gearPath"])}
        <Rule />
        {tools(["compass", "magnet", "dark"])}
        <SelectBox $width={120} $off>
          <select aria-label="Směr" disabled><option>Normála</option></select>
          <Caret $muted />
        </SelectBox>
        {tools(["eraseCur", "gearCur", "play", "dots", "line1", "line2", "circleDot", "circleQ", "wave", "arc"])}
      </ToolRow>
      <Workspace>
        <Side>
          <SideTitle>
            <span>Posun</span>
            <SmallButton aria-label="Ukotvit"><Icon name="restore" size={14} /></SmallButton>
            <SmallButton aria-label="Zavřít"><Icon name="close" size={18} /></SmallButton>
          </SideTitle>
          <SideBody>
            <Rail>
              <RailButton $active aria-label="Posun"><MoveArt index={1} size={30} /></RailButton>
              {["tree", "viewBox", "scene", "people"].map((n) => (
                <RailButton key={n} aria-label={n}><Icon name={n} size={30} /></RailButton>
              ))}
            </Rail>
            <Form onSubmit={(e) => e.preventDefault()}>
              <FormBar>
                <BarButton type="button" aria-label="OK"><Icon name="ok" /></BarButton>
                <BarButton type="button" aria-label="Storno"><Icon name="cancel" /></BarButton>
                <BarButton type="button" aria-label="Použít"><Icon name="apply" /></BarButton>
                <BarButton type="button" $push>F</BarButton>
                <BarButton type="button" aria-label="Informace"><Icon name="info" size={18} /></BarButton>
                <BarButton type="button" $slim aria-label="Rozšířit"><Icon name="flyout" size={18} /></BarButton>
              </FormBar>
              <Section>
                <SectionHead type="button">Požadováno</SectionHead>
                <SectionBody>
                  <Modes>
                    {moveArt.map((_, i) => (
                      <Mode key={i} type="button" $on={i === 1} aria-label={`Režim ${i + 1}`}>
                        <MoveArt index={i} />
                      </Mode>
                    ))}
                  </Modes>
                  {fields1.map((f) => <FieldRow key={f.id} {...f} />)}
                </SectionBody>
              </Section>
              <Section>
                <SectionHead type="button">Orientace</SectionHead>
                <SectionBody>
                  {fields2.map((f) => <FieldRow key={f.id} {...f} />)}
                </SectionBody>
              </Section>
              <Marker />
            </Form>
          </SideBody>
        </Side>
        <View>
          <DocTabs>
            <DocTab>
              <span>* Díl002.Z3PRT</span>
              <button aria-label="Zavřít dokument"><Icon name="closeTab" size={14} /></button>
            </DocTab>
            <NewTab aria-label="Nový dokument"><Icon name="addTab" size={14} /></NewTab>
          </DocTabs>
          <Canvas>
            <Model />
            <Hint>
              &lt;LEVÝ-KLIK&gt; PRO AKTIVACI DYNAMICKÉHO VSTUPU VÝBĚRU.
              <br />
              &lt;pravý-klik&gt; pro volby zadání bodu.
            </Hint>
            <ViewBar>
              {viewTools.map(([n, more]) => (
                <React.Fragment key={n}>
                  <ViewTool aria-label={n}><Icon name={n} /></ViewTool>
                  {more && <DropCaret label={`${n} – další`} />}
                </React.Fragment>
              ))}
              <ViewTool aria-label="Barva hran"><Swatch $color="#000" /></ViewTool>
              <ViewTool aria-label="Barva ploch"><Swatch $color="#bfe4f5" $tall /></ViewTool>
              <ViewTool aria-label="Hladiny"><Icon name="layers" /></ViewTool>
              <DropCaret label="Hladiny – další" />
              <LayerBox>
                <Icon name="bulb" size={16} />
                <Icon name="ring" size={16} />
                <select aria-label="Hladina" disabled><option>Hladina0000</option></select>
              </LayerBox>
            </ViewBar>
            <Triad width="80" height="90" viewBox="0 -20 80 90" aria-label="Souřadný systém">
              <text x="39" y="18" fill="#1414f0">Z</text>
              <path d="M45 30L46.500 70" stroke="#1414f0" strokeWidth="2.400" />
              <polygon points="44.500,19 41,34 48,34" fill="#1a1ac0" />
              <path d="M8 69h3M17 69h3" stroke="#25c625" strokeWidth="2" />
            </Triad>
          </Canvas>
        </View>
      </Workspace>
    </Page>
  );
}
